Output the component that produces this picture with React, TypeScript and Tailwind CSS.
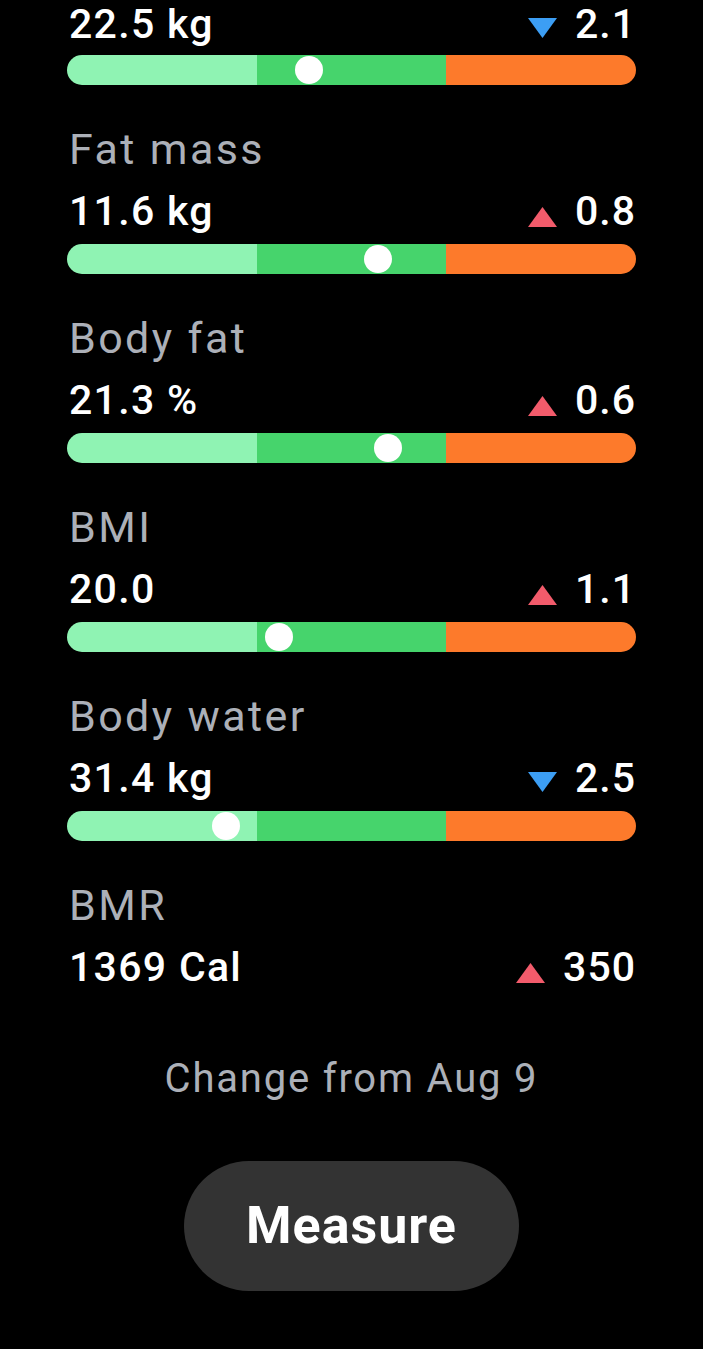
type Trend = 'up' | 'down';

type Metric = {
  label?: string;
  value: string;
  change: string;
  trend: Trend;
  knob?: number; // knob centre, 0..1 along the bar
};

const metrics: Metric[] = [
  { value: '22.5 kg', change: '2.1', trend: 'down', knob: 0.426 },
  { label: 'Fat mass', value: '11.6 kg', change: '0.8', trend: 'up', knob: 0.546 },
  { label: 'Body fat', value: '21.3 %', change: '0.6', trend: 'up', knob: 0.565 },
  { label: 'BMI', value: '20.0', change: '1.1', trend: 'up', knob: 0.373 },
  { label: 'Body water', value: '31.4 kg', change: '2.5', trend: 'down', knob: 0.279 },
  { label: 'BMR', value: '1369 Cal', change: '350', trend: 'up' },
];

function TrendIcon({ trend }: { trend: Trend }) {
  return trend === 'up' ? (
    <svg width="29" height="20" viewBox="0 0 29 20" className="mt-[12px]">
      <polygon points="14.5,0 29,20 0,20" fill="#f25b6b" />
    </svg>
  ) : (
    <svg width="29" height="20" viewBox="0 0 29 20" className="mt-[8px]">
      <polygon points="0,0 29,0 14.5,20" fill="#3c9ef4" />
    </svg>
  );
}

function RangeBar({ knob }: { knob: number }) {
  return (
    <div className="relative h-[30px] w-full">
      <div className="flex h-full w-full overflow-hidden rounded-full">
        <div className="flex-1 bg-[#8ff3b3]" />
        <div className="flex-1 bg-[#46d46c]" />
        <div className="flex-1 bg-[#fd7a2b]" />
      </div>
      <div
        className="absolute top-[1px] h-[28px] w-[28px] -translate-x-1/2 rounded-full bg-white"
        style={{ left: `${knob * 100}%` }}
      />
    </div>
  );
}

function MetricRow({ m, first }: { m: Metric; first: boolean }) {
  const line = first ? 'h-[48px] leading-[48px] mb-[7px]' : 'h-[62px] leading-[62px] mb-[2px]';
  return (
    <div>
      {m.label && (
        <div className="h-[62px] pl-[2px] text-[43px] leading-[62px] tracking-[2.4px] text-[#acb0b8]">
          {m.label}
        </div>
      )}
      <div className={`flex items-center justify-between ${line}`}>
        <span className="pl-[2px] text-[41px] font-medium tracking-[1.3px] text-white">{m.value}</span>
        <span className="flex items-center gap-[18px] text-[41px] font-medium tracking-[1px] text-white">
          <TrendIcon trend={m.trend} />
          {m.change}
        </span>
      </div>
      {m.knob !== undefined && (
        <div className="mb-[33px]">
          <RangeBar knob={m.knob} />
        </div>
      )}
    </div>
  );
}

export default function App() {
  return (
    <div
      className="h-[1349px] w-[703px] overflow-hidden bg-black"
      style={{ fontFamily: 'Roboto, "Noto Sans", sans-serif' }}
    >
      <div className="px-[67px]">
        {metrics.map((m, i) => (
          <MetricRow key={i} m={m} first={i === 0} />
        ))}
      </div>
      <div className="mt-[50px] h-[62px] text-center text-[40px] leading-[62px] tracking-[1.8px] text-[#acb0b8]">
        Change from Aug 9
      </div>
      <div className="mt-[51px] flex justify-center">
        <button className="h-[130px] w-[335px] rounded-full bg-[#333333] text-[52px] font-bold tracking-[1px] text-white">
          Measure
        </button>
      </div>
    </div>
  );
}
